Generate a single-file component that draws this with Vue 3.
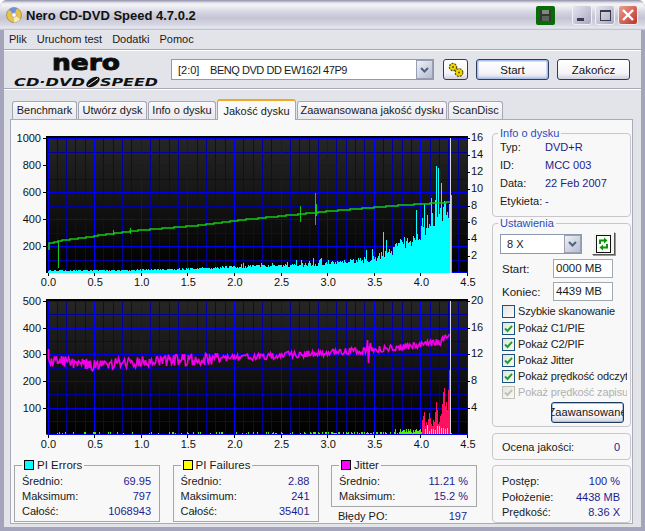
<script setup>
// seeded random so the traces look the same on every load
let seed = 4711
const rnd = () => {
  seed = (seed * 1664525 + 1013904223) % 4294967296
  return seed / 4294967296
}
const lerp = (pts, x) => {
  for (let i = 1; i < pts.length; i++) {
    if (x <= pts[i][0]) {
      const [x0, y0] = pts[i - 1]
      const [x1, y1] = pts[i]
      return y0 + ((y1 - y0) * (x - x0)) / (x1 - x0)
    }
  }
  return pts[pts.length - 1][1]
}

const menu = ['Plik', 'Uruchom test', 'Dodatki', 'Pomoc']
const tabs = [
  { name: 'Benchmark', width: 65 },
  { name: 'Utwórz dysk', width: 69 },
  { name: 'Info o dysku', width: 68 },
  { name: 'Jakość dysku', width: 79, active: true },
  { name: 'Zaawansowana jakość dysku', width: 150 },
  { name: 'ScanDisc', width: 55 },
]

const charts = [
  {
    top: 138,
    bottom: 273,
    left: ['1000', '800', '600', '400', '200'],
    right: ['16', '14', '12', '10', '8', '6', '4', '2'],
  },
  {
    top: 301,
    bottom: 434.5,
    left: ['500', '400', '300', '200', '100'],
    right: ['20', '16', '12', '8', '4'],
  },
]
const plotLeft = 47.5
const plotRight = 467
const xLabels = ['0.0', '0.5', '1.0', '1.5', '2.0', '2.5', '3.0', '3.5', '4.0', '4.5']
const xAt = (i) => plotLeft + (i * (plotRight - plotLeft)) / 45

const minorV = []
const majorV = []
for (let i = 0; i <= 45; i++) {
  if (i % 5 === 0) majorV.push(xAt(i))
  else minorV.push(xAt(i))
}

// cyan PI errors bars
const cyanEnv = [[48, 2.5], [140, 3], [190, 4], [234, 6], [280, 7], [327, 9], [374, 14], [393, 23], [420, 38], [430, 56], [436, 52], [451, 64]]
const cyanPeaks = { 383: 41, 416: 63, 422: 55, 436: 107, 438: 105, 441: 90, 444: 72, 427: 58, 432: 60 }
let cyan = ''
for (let x = 48; x <= 451; x++) {
  let h = lerp(cyanEnv, x) * (0.8 + 0.45 * rnd())
  if (x > 230 && rnd() > 0.9) h *= 1.45
  if (cyanPeaks[x]) h = cyanPeaks[x]
  cyan += `M${x + 0.5} 273V${(273 - h).toFixed(1)}`
}

// green read speed
const greenPts = [[49, 243], [58, 241], [94, 236], [140, 230], [190, 226], [250, 219], [320, 212], [390, 206], [450, 202]]
let green = 'M49 250V243'
for (let x = 50; x <= 450; x += 4) green += `H${x}V${Math.round(lerp(greenPts, x))}`
const greenSpikes = 'M58.5 241V268M113.5 230V235M130.5 228V234M300.5 206V222M315.5 193V225M316.5 204V216'

// magenta jitter
const jitterPts = [[48, 361], [94, 365], [140, 362], [250, 357], [327, 353], [370, 350], [400, 347], [440, 342], [449, 335]]
let jitter = 'M48.5 349V358'
for (let x = 49; x <= 449; x++) {
  const amp = x < 220 ? 6 : 3.5
  let y = lerp(jitterPts, x) + (rnd() - 0.5) * 2 * amp
  if (x === 367) y = 340
  if (x === 368) y = 363
  if (x === 370) y = 343
  jitter += `L${x + 0.5} ${y.toFixed(1)}`
}

// PI failures along the bottom of the second chart
let lime = ''
for (let x = 48; x <= 451; x++) {
  const chance = x < 300 ? 0.2 : x < 400 ? 0.5 : 1
  if (rnd() < chance) {
    const h = x < 395 ? 1 + rnd() * 1.5 : 1 + rnd() * 4
    lime += `M${x + 0.5} 434V${(434 - h).toFixed(1)}`
  }
}
const redBars = { 422: 14, 423: 18, 424: 22, 425: 8, 426: 12, 427: 9, 428: 15, 429: 21, 430: 16, 431: 10, 432: 8, 433: 14, 434: 12, 435: 22, 436: 32, 437: 24, 438: 10, 439: 12, 440: 18, 441: 20, 442: 30, 443: 42, 444: 46, 445: 28, 446: 32, 447: 24, 448: 44, 449: 64, 450: 38 }
let red = ''
let yellow = ''
for (const k in redBars) red += `M${+k + 0.5} 434V${434 - redBars[k]}`
for (let x = 425; x <= 447; x += 2) yellow += `M${x + 0.5} 434V${434 - 3 - rnd() * 6}`

const stats = [
  {
    name: 'PI Errors',
    color: '#00ffff',
    rows: [['Średnio:', '69.95'], ['Maksimum:', '797'], ['Całość:', '1068943']],
  },
  {
    name: 'PI Failures',
    color: '#ffff00',
    rows: [['Średnio:', '2.88'], ['Maksimum:', '241'], ['Całość:', '35401']],
  },
]
const infoRows = [
  ['Typ:', 'DVD+R'],
  ['ID:', 'MCC 003'],
  ['Data:', '22 Feb 2007'],
  ['Etykieta:', '-'],
]
const checks = [
  { label: 'Pokaż C1/PIE', on: true },
  { label: 'Pokaż C2/PIF', on: true },
  { label: 'Pokaż Jitter', on: true },
  { label: 'Pokaż prędkość odczytu', on: true },
  { label: 'Pokaż prędkość zapisu', on: true, disabled: true },
]
const progress = [
  ['Postęp:', '100 %'],
  ['Położenie:', '4438 MB'],
  ['Prędkość:', '8.36 X'],
]
</script>

<template>
  <div class="window">
    <header class="titlebar">
      <svg class="app-icon" width="16" height="16" viewBox="0 0 16 16">
        <circle cx="8" cy="8" r="7.5" fill="#e8c24a" stroke="#8a7a3a" stroke-width="0.6" />
        <path d="M8 8L3 2.5A7.5 7.5 0 0 1 11 1.2Z" fill="#6f8fe0" />
        <path d="M8 8L14 12A7.5 7.5 0 0 1 8 15.5Z" fill="#f4ecc0" />
        <circle cx="8" cy="8" r="2.2" fill="#fff" stroke="#888" stroke-width="0.5" />
      </svg>
      <span class="title-text">Nero CD-DVD Speed 4.7.0.2</span>
      <span class="floppy">
        <svg width="17" height="17" viewBox="0 0 17 17">
          <path d="M3 3H13L14 4V14H3Z" fill="#2e3a2e" />
          <rect x="5" y="3" width="7" height="4" fill="#7d8a7d" />
          <rect x="5" y="9" width="7" height="5" fill="#586458" />
        </svg>
      </span>
      <div class="win-buttons">
        <button class="win-btn"><span class="min-glyph"></span></button>
        <button class="win-btn"><span class="max-glyph"></span></button>
        <button class="win-btn close">
          <svg width="14" height="14" viewBox="0 0 14 14">
            <path d="M2 2L12 12M12 2L2 12" stroke="#fff" stroke-width="2.4" fill="none" />
          </svg>
        </button>
      </div>
    </header>

    <div class="client">
      <nav class="menubar">
        <span v-for="item in menu" :key="item">{{ item }}</span>
      </nav>

      <div class="toolbar">
        <svg class="logo" width="150" height="38" viewBox="0 0 150 38">
          <text x="39" y="19" class="logo-nero" textLength="68" lengthAdjust="spacingAndGlyphs">nero</text>
          <text x="1" y="35" class="logo-sub" textLength="71" lengthAdjust="spacingAndGlyphs">CD·DVD</text>
          <ellipse cx="80" cy="31" rx="7.5" ry="4" fill="#111" transform="rotate(-32 80 31)" />
          <path d="M75 34.5L85 27.5" stroke="#fff" stroke-width="1" />
          <text x="87" y="35" class="logo-sub" textLength="58" lengthAdjust="spacingAndGlyphs">SPEED</text>
        </svg>
        <div class="combo drive">
          <span class="combo-text"><span class="drive-id">[2:0]</span><span class="drive-name">BENQ DVD DD EW162I 47P9</span></span>
          <span class="combo-arrow"><svg width="9" height="6" viewBox="0 0 9 6"><path d="M1 1L4.5 4.5L8 1" fill="none" stroke="#4d6185" stroke-width="2" /></svg></span>
        </div>
        <button class="btn gear">
          <svg width="18" height="16" viewBox="0 0 18 16">
            <circle cx="6" cy="5" r="3.6" fill="#f0d800" stroke="#5a5200" stroke-width="1.2" stroke-dasharray="2 1" />
            <circle cx="12" cy="10.5" r="3.8" fill="#f0d800" stroke="#5a5200" stroke-width="1.2" stroke-dasharray="2 1" />
            <circle cx="6" cy="5" r="1" fill="#5a5200" />
            <circle cx="12" cy="10.5" r="1" fill="#5a5200" />
          </svg>
        </button>
        <button class="btn action default">Start</button>
        <button class="btn action">Zakończ</button>
      </div>

      <div class="tabs">
        <div
          v-for="tab in tabs"
          :key="tab.name"
          class="tab"
          :class="{ active: tab.active }"
          :style="{ width: tab.width + 'px' }"
        >
          {{ tab.name }}
        </div>
      </div>

      <main class="panel">
        <div class="left">
          <svg class="plots" width="480" height="340" viewBox="11 120 480 340">
            <defs>
              <linearGradient id="plotbg" x1="0" y1="0" x2="0" y2="1">
                <stop offset="0" stop-color="#262626" />
                <stop offset="1" stop-color="#000" />
              </linearGradient>
            </defs>
            <g v-for="(c, n) in charts" :key="n">
              <rect x="47" :y="c.top - 1" width="420" :height="c.bottom - c.top + 1" fill="url(#plotbg)" />
              <rect x="46" :y="c.top - 2" width="422" height="2" fill="#000" />
              <rect x="46" :y="c.top - 2" width="1.5" :height="c.bottom - c.top + 2" fill="#000" />
              <g shape-rendering="crispEdges">
                <path
                  v-for="i in 5"
                  :key="'m' + i"
                  :d="`M47 ${Math.round(c.top + ((i * 2 - 1) * (c.bottom - c.top)) / 10) + 0.5}H467`"
                  stroke="#00009c"
                />
                <path v-for="x in minorV" :key="x" :d="`M${Math.round(x) + 0.5} ${c.top}V${c.bottom}`" stroke="#00009c" />
                <path
                  v-for="i in 4"
                  :key="'h' + i"
                  :d="`M47 ${Math.round(c.top + (i * (c.bottom - c.top)) / 5) + 0.5}H467`"
                  stroke="#0000f0"
                />
                <path v-for="x in majorV" :key="x" :d="`M${Math.round(x) + 0.5} ${c.top}V${c.bottom}`" stroke="#0000ff" />
                <path :d="`M47 ${c.top + 0.5}H467`" stroke="#0000f0" />
                <path :d="`M47 ${Math.round(c.bottom) - 0.5}H467`" stroke="#0000ff" />
                <!-- ticks -->
                <path
                  v-for="i in 5"
                  :key="'lt' + i"
                  :d="`M43 ${Math.round(c.top + ((i - 1) * (c.bottom - c.top)) / 5) + 0.5}H47`"
                  stroke="#000"
                />
                <path
                  v-for="(l, i) in c.right"
                  :key="'rt' + i"
                  :d="`M467 ${Math.round(c.top + (i * (c.bottom - c.top)) / c.right.length) + 0.5}H470`"
                  stroke="#000"
                />
                <path v-for="x in majorV" :key="'b' + x" :d="`M${Math.round(x) + 0.5} ${c.bottom}V${c.bottom + 3}`" stroke="#000" />
              </g>
              <text
                v-for="(l, i) in c.left"
                :key="l"
                x="41"
                :y="c.top + 4 + (i * (c.bottom - c.top)) / 5"
                text-anchor="end"
                class="axis"
              >{{ l }}</text>
              <text
                v-for="(l, i) in c.right"
                :key="l"
                x="471"
                :y="c.top + 3 + (i * (c.bottom - c.top)) / c.right.length"
                class="axis"
              >{{ l }}</text>
              <text
                v-for="(l, i) in xLabels"
                :key="l"
                :x="xAt(i * 5) + 1"
                :y="c.bottom + 13"
                text-anchor="middle"
                class="axis"
              >{{ l }}</text>
            </g>

            <!-- chart one -->
            <path :d="cyan" stroke="#00ffff" stroke-width="1" shape-rendering="crispEdges" fill="none" />
            <path :d="green" stroke="#14c814" stroke-width="1.5" fill="none" />
            <path :d="greenSpikes" stroke="#14c814" stroke-width="1" fill="none" shape-rendering="crispEdges" />
            <path d="M450.5 138V273" stroke="#d8d8d8" shape-rendering="crispEdges" />

            <!-- chart two -->
            <path :d="lime" stroke="#50f000" stroke-width="1" shape-rendering="crispEdges" fill="none" />
            <path :d="red" stroke="#ff1060" stroke-width="1" shape-rendering="crispEdges" fill="none" />
            <path :d="yellow" stroke="#f0e000" stroke-width="1" shape-rendering="crispEdges" fill="none" />
            <path :d="jitter" stroke="#f400e8" stroke-width="1.6" fill="none" />
            <path d="M450.5 301V434" stroke="#d8d8d8" shape-rendering="crispEdges" />
          </svg>

          <div class="stats">
            <fieldset v-for="s in stats" :key="s.name" class="stat-box">
              <legend><i class="swatch" :style="{ background: s.color }"></i>{{ s.name }}</legend>
              <div v-for="row in s.rows" :key="row[0]" class="row">
                <span>{{ row[0] }}</span><b>{{ row[1] }}</b>
              </div>
            </fieldset>
            <div class="jitter-col">
              <fieldset class="stat-box">
                <legend><i class="swatch magenta"></i>Jitter</legend>
                <div class="row"><span>Średnio:</span><b>11.21 %</b></div>
                <div class="row"><span>Maksimum:</span><b>15.2 %</b></div>
              </fieldset>
              <div class="row po"><span>Błędy PO:</span><b>197</b></div>
            </div>
          </div>
        </div>

        <aside class="right">
          <fieldset class="group info">
            <legend>Info o dysku</legend>
            <div v-for="row in infoRows" :key="row[0]" class="info-row">
              <span class="info-label">{{ row[0] }}</span><b>{{ row[1] }}</b>
            </div>
          </fieldset>

          <fieldset class="group settings">
            <legend>Ustawienia</legend>
            <div class="speed-row">
              <div class="combo speed">
                <span class="combo-text">8 X</span>
                <span class="combo-arrow"><svg width="9" height="6" viewBox="0 0 9 6"><path d="M1 1L4.5 4.5L8 1" fill="none" stroke="#4d6185" stroke-width="2" /></svg></span>
              </div>
              <button class="refresh">
                <svg width="15" height="18" viewBox="0 0 15 18">
                  <rect x="0.5" y="0.5" width="14" height="17" fill="#f6fff6" stroke="#111" />
                  <path d="M4 9V5.5H8" fill="none" stroke="#109010" stroke-width="2" />
                  <path d="M8 2.5L11.5 5.5L8 8.5Z" fill="#109010" />
                  <path d="M11 9V12.5H7" fill="none" stroke="#109010" stroke-width="2" />
                  <path d="M7 9.5L3.5 12.5L7 15.5Z" fill="#109010" />
                </svg>
              </button>
            </div>
            <div class="field"><span>Start:</span><div class="input">0000 MB</div></div>
            <div class="field"><span>Koniec:</span><div class="input">4439 MB</div></div>
            <div class="check quick"><i class="box"></i>Szybkie skanowanie</div>
            <div v-for="c in checks" :key="c.label" class="check" :class="{ disabled: c.disabled }">
              <i class="box">
                <svg width="11" height="11" viewBox="0 0 11 11">
                  <path d="M2 5.5L4.5 8L9 2.8" fill="none" stroke="currentColor" stroke-width="2" />
                </svg>
              </i>
              <span class="clip">{{ c.label }}</span>
            </div>
            <div class="adv-row">
              <button class="btn adv"><span>Zaawansowane</span></button>
            </div>
          </fieldset>

          <div class="group plain quality">
            <span>Ocena jakości:</span><b>0</b>
          </div>

          <div class="group plain progress">
            <div v-for="row in progress" :key="row[0]" class="row">
              <span>{{ row[0] }}</span><b>{{ row[1] }}</b>
            </div>
          </div>
        </aside>
      </main>
    </div>
  </div>
</template>

<style scoped>
.window {
  width: 645px;
  height: 531px;
  box-sizing: border-box;
  display: flex;
  flex-direction: column;
  overflow: hidden;
  font: 11px "Liberation Sans", Arial, sans-serif;
  color: #1a1a1a;
  background: #a4a4bc;
  border-radius: 7px 7px 0 0;
}
.axis {
  font: 11px "Liberation Sans", Arial, sans-serif;
  fill: #111;
}
.titlebar {
  height: 30px;
  flex: none;
  display: flex;
  align-items: center;
  padding: 0 7px 0 6px;
  box-sizing: border-box;
  background: linear-gradient(#8e8ea8 0, #e8e8f0 3px, #f4f4f8 5px, #d2d2e0 13px, #c4c4d4 18px, #d8d8e4 25px, #e8e8f0 28px, #b8b8c8 30px);
}
.app-icon {
  margin-right: 4px;
}
.title-text {
  font-size: 13px;
  font-weight: 700;
  color: #111;
  flex: 1;
}
.floppy {
  width: 19px;
  height: 19px;
  margin-right: 17px;
  border-radius: 2px;
  background: #0a6a0a;
  display: flex;
  align-items: center;
  justify-content: center;
}
.win-buttons {
  display: flex;
  gap: 3px;
}
.win-btn {
  width: 20px;
  height: 20px;
  padding: 0;
  border: 1px solid #f0f0f6;
  border-radius: 3px;
  background: linear-gradient(135deg, #e4e4ee, #a8a8c0);
  display: flex;
  align-items: center;
  justify-content: center;
  position: relative;
}
.win-btn.close {
  background: linear-gradient(135deg, #eaa090, #c03028);
}
.min-glyph {
  width: 7px;
  height: 3px;
  background: #3a3a50;
  margin-top: 8px;
  margin-right: 3px;
}
.max-glyph {
  width: 9px;
  height: 8px;
  border: 1px solid #3a3a50;
  border-top-width: 2px;
}
.client {
  flex: 1;
  min-height: 0;
  margin: 0 4px 4px;
  background: #e3e3ea;
  display: flex;
  flex-direction: column;
}
.menubar {
  height: 20px;
  flex: none;
  display: flex;
  align-items: center;
  gap: 10px;
  padding: 0 0 2px 5px;
  box-sizing: border-box;
  border-bottom: 1px solid #a8a8b4;
  box-shadow: 0 1px 0 #fff;
}
.toolbar {
  height: 38px;
  flex: none;
  margin-top: 1px;
  display: flex;
  align-items: center;
  border-bottom: 1px solid #a8a8b4;
  box-shadow: 0 1px 0 #fff;
  padding-left: 9px;
  box-sizing: border-box;
}
.logo {
  flex: none;
  margin-right: 8px;
}
.logo-nero {
  font: 900 22px "DejaVu Sans", sans-serif;
  fill: #0c0c0c;
  stroke: #0c0c0c;
  stroke-width: 0.9px;
}
.logo-sub {
  font: italic 700 10px "DejaVu Sans", sans-serif;
  fill: #111;
}
.combo {
  box-sizing: border-box;
  background: #fff;
  border: 1px solid #8e9aae;
  display: flex;
  align-items: stretch;
}
.combo-text {
  flex: 1;
  display: flex;
  align-items: center;
  padding-left: 6px;
  white-space: nowrap;
  overflow: hidden;
}
.drive-id {
  width: 32px;
  flex: none;
}
.drive-name {
  letter-spacing: -0.45px;
}
.combo-arrow {
  width: 15px;
  background: linear-gradient(135deg, #f0f0f6, #b6bcd0);
  border: 1px solid #fff;
  outline: 1px solid #9aa0b4;
  outline-offset: -1px;
  display: flex;
  align-items: center;
  justify-content: center;
}
.drive {
  width: 263px;
  height: 21px;
  margin-right: 9px;
}
.btn {
  box-sizing: border-box;
  font: inherit;
  color: #111;
  padding: 0;
  border: 1px solid #2c3d60;
  border-radius: 3px;
  background: linear-gradient(#fff, #f4f4f8 70%, #d0d0de);
}
.gear {
  width: 25px;
  height: 21px;
  margin-right: 8px;
  display: flex;
  align-items: center;
  justify-content: center;
}
.action {
  width: 73px;
  height: 21px;
  margin-right: 8px;
  font-size: 11.5px;
}
.default {
  box-shadow: inset 0 0 0 1.5px #a8c0ec;
}
.tabs {
  flex: none;
  height: 29px;
  margin-top: 1px;
  padding-left: 8px;
  display: flex;
  align-items: flex-end;
  gap: 1px;
  box-sizing: border-box;
  position: relative;
  z-index: 1;
}
.tab {
  box-sizing: border-box;
  height: 18px;
  text-align: center;
  line-height: 17px;
  white-space: nowrap;
  border: 1px solid #a4a8b4;
  border-bottom: none;
  border-radius: 3px 3px 0 0;
  background: linear-gradient(#fafafc, #e8e8ee);
}
.tab.active {
  height: 21px;
  margin-bottom: -1px;
  line-height: 20px;
  background: #f9f9f9;
  border-top: 2px solid #f0a828;
}
.panel {
  flex: none;
  height: 405px;
  width: 623px;
  box-sizing: border-box;
  margin-left: 6px;
  background: #f8f8f8;
  border: 1px solid #a8acb8;
  display: flex;
}
.left {
  width: 481px;
  flex: none;
}
.plots {
  display: block;
}
.stats {
  display: flex;
  margin: -1px 0 0 3px;
  gap: 12.5px;
}
.stat-box {
  box-sizing: border-box;
  width: 146px;
  height: 63px;
  margin: 0;
  padding: 3px 8px 0 7px;
  border: 1px solid #a6a6a6;
  min-width: 0;
}
.stat-box legend {
  padding: 0 2px;
  margin-left: 0;
  display: flex;
  align-items: center;
  line-height: 12px;
  font-size: 11.5px;
}
.swatch {
  width: 8px;
  height: 8px;
  border: 1px solid #000;
  margin-right: 3px;
}
.swatch.magenta {
  background: #ff00ff;
}
.row {
  display: flex;
  justify-content: space-between;
  height: 15px;
  line-height: 15px;
}
.row b,
.info-row b,
.quality b {
  font-weight: 400;
  color: #1c1c90;
}
.jitter-col .stat-box {
  height: 48px;
}
.po {
  padding: 1px 10px 0 7px;
  margin-top: 1px;
  width: 146px;
  box-sizing: border-box;
}
.right {
  width: 139px;
  flex: none;
  padding-top: 7px;
  display: flex;
  flex-direction: column;
}
.group {
  box-sizing: border-box;
  width: 139px;
  margin: 0;
  min-width: 0;
  border: 1px solid #c8c8cc;
  border-radius: 4px;
  padding: 0 0 0 7px;
}
.group legend {
  color: #2a4cc0;
  font-size: 11px;
  line-height: 12px;
  padding: 0 2px;
  margin-left: -2px;
}
.info {
  height: 90px;
}
.info-row {
  display: flex;
  height: 18px;
  line-height: 17px;
}
.info-label {
  width: 45px;
}
.settings {
  height: 210px;
}
.speed-row {
  display: flex;
  align-items: center;
  margin-top: 3px;
  height: 23px;
}
.speed {
  width: 82px;
  height: 20px;
  margin-right: 10px;
}
.refresh {
  width: 23px;
  height: 23px;
  padding: 0;
  background: #f4f4f0;
  border: 1px solid;
  border-color: #fff #555 #555 #fff;
  box-shadow: 1px 1px 0 #999;
  display: flex;
  align-items: center;
  justify-content: center;
}
.field {
  display: flex;
  align-items: center;
  justify-content: space-between;
  height: 19px;
  margin: 4px 17px 0 2px;
  font-size: 11.5px;
}
.input {
  box-sizing: border-box;
  width: 60px;
  height: 19px;
  line-height: 17px;
  background: #fff;
  border: 1px solid #a0a8b0;
  padding-left: 2px;
  color: #1a1a1a;
}
.check {
  display: flex;
  align-items: center;
  height: 16px;
  margin-left: 2px;
  white-space: nowrap;
  color: #222;
  letter-spacing: -0.15px;
}
.check.quick {
  margin-top: 2px;
  margin-bottom: 1px;
}
.box {
  box-sizing: border-box;
  width: 13px;
  height: 13px;
  flex: none;
  margin-right: 3px;
  border: 1px solid #1c5180;
  background: linear-gradient(135deg, #e4e4de, #fafafa);
  color: #21a121;
  display: flex;
  align-items: center;
  justify-content: center;
}
.clip {
  width: 109px;
  overflow: hidden;
}
.check.disabled {
  color: #b0b0b0;
}
.check.disabled .box {
  border-color: #c0c0b8;
  color: #c0c0b8;
}
.adv-row {
  margin: 2px 0 0 51px;
}
.adv {
  width: 73px;
  height: 21px;
  border: 1px solid #1c3a60;
  overflow: hidden;
  display: flex;
  justify-content: center;
  box-shadow: inset 0 0 0 1px #a8c0ec;
}
.adv span {
  line-height: 19px;
  white-space: nowrap;
  letter-spacing: 0.1px;
}
.plain {
  padding: 0 10px 0 9px;
}
.quality {
  height: 27px;
  margin-top: 6px;
  display: flex;
  align-items: center;
  justify-content: space-between;
}
.progress {
  height: 58px;
  margin-top: 5px;
  padding-top: 8px;
}
.progress .row {
  height: 15.5px;
}
</style>

<style>
html,
body {
  background: #fff;
}
</style>
